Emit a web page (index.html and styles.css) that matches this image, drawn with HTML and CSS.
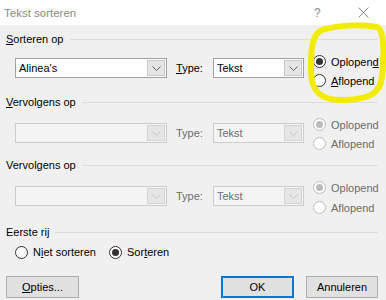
FILE: index.html
```html
<!DOCTYPE html>
<html>
<head>
<meta charset="utf-8">
<link rel="stylesheet" href="styles.css">
</head>
<body>
<div class="dialog">
  <div class="titlebar">
    <span class="title">Tekst sorteren</span>
    <span class="tb-help">?</span>
    <svg class="tb-close" width="11" height="11" viewBox="0 0 11 11"><path d="M0.5 0.5L10.5 10.5M10.5 0.5L0.5 10.5" stroke="#8c8c8c" stroke-width="1" fill="none"/></svg>
  </div>
  <div class="content">
    <div class="group-label"><span><u>S</u>orteren op</span><span class="rule"></span></div>
    <div class="row">
      <div class="combo combo-wide first"><span class="combo-text">Alinea's</span><span class="combo-btn"><svg width="9" height="5" viewBox="0 0 9 5"><path d="M0.5 0.5L4.5 4.5L8.5 0.5" stroke="#606060" fill="none"/></svg></span></div>
      <span class="type-label first"><u>T</u>ype:</span>
      <div class="combo combo-type first"><span class="combo-text">Tekst</span><span class="combo-btn"><svg width="9" height="5" viewBox="0 0 9 5"><path d="M0.5 0.5L4.5 4.5L8.5 0.5" stroke="#606060" fill="none"/></svg></span></div>
      <div class="radios">
        <div class="radio"><span class="circle checked"></span><span>Oplopen<u>d</u></span></div>
        <div class="radio"><span class="circle"></span><span><u>A</u>flopend</span></div>
      </div>
    </div>

    <div class="group-label"><span><u>V</u>ervolgens op</span><span class="rule"></span></div>
    <div class="row disabled">
      <div class="combo combo-wide"><span class="combo-text"></span><span class="combo-btn"><svg width="9" height="5" viewBox="0 0 9 5"><path d="M0.5 0.5L4.5 4.5L8.5 0.5" stroke="#c4c4c4" fill="none"/></svg></span></div>
      <span class="type-label">Type:</span>
      <div class="combo combo-type"><span class="combo-text">Tekst</span><span class="combo-btn"><svg width="9" height="5" viewBox="0 0 9 5"><path d="M0.5 0.5L4.5 4.5L8.5 0.5" stroke="#c4c4c4" fill="none"/></svg></span></div>
      <div class="radios">
        <div class="radio"><span class="circle checked"></span><span>Oplopend</span></div>
        <div class="radio"><span class="circle"></span><span>Aflopend</span></div>
      </div>
    </div>

    <div class="group-label"><span>Vervol<u>g</u>ens op</span><span class="rule"></span></div>
    <div class="row disabled row-last">
      <div class="combo combo-wide"><span class="combo-text"></span><span class="combo-btn"><svg width="9" height="5" viewBox="0 0 9 5"><path d="M0.5 0.5L4.5 4.5L8.5 0.5" stroke="#c4c4c4" fill="none"/></svg></span></div>
      <span class="type-label">Type:</span>
      <div class="combo combo-type"><span class="combo-text">Tekst</span><span class="combo-btn"><svg width="9" height="5" viewBox="0 0 9 5"><path d="M0.5 0.5L4.5 4.5L8.5 0.5" stroke="#c4c4c4" fill="none"/></svg></span></div>
      <div class="radios">
        <div class="radio"><span class="circle checked"></span><span>Oplopend</span></div>
        <div class="radio tall"><span class="circle"></span><span>Aflopend</span></div>
      </div>
    </div>

    <div class="group-label label-first-row"><span>Eerste rij</span><span class="rule"></span></div>
    <div class="radio-line">
      <div class="radio"><span class="circle"></span><span>N<u>i</u>et sorteren</span></div>
      <div class="radio"><span class="circle checked"></span><span>Sor<u>t</u>eren</span></div>
    </div>

    <div class="buttons">
      <button class="btn"><u>O</u>pties...</button>
      <span class="spacer"></span>
      <button class="btn btn-default">OK</button>
      <button class="btn">Annuleren</button>
    </div>
  </div>
  <svg class="highlight" width="386" height="300" viewBox="0 0 386 300">
    <path d="M320 31 C334 25 362 24 377 27 C385 31 384 55 382 76 C381 93 370 99 345 100 C321 101 311 92 311 70 C311 50 312 36 320 31 Z" stroke="#f2ec00" stroke-width="6" fill="none" stroke-linejoin="round"/>
  </svg>
</div>
</body>
</html>
```
FILE: styles.css
```css
* { box-sizing: border-box; }
html, body { margin: 0; padding: 0; }
body {
  width: 386px;
  height: 300px;
  overflow: hidden;
  background: #f0f0f0;
  font-family: "Liberation Sans", Arial, sans-serif;
  font-size: 11px;
  color: #000;
}
.dialog { position: relative; width: 386px; height: 300px; }
.titlebar {
  height: 25px;
  background: #fff;
  display: flex;
  align-items: center;
  padding-left: 4px;
  color: #8c8c8c;
  font-size: 11.5px;
}
.title { flex: 1; }
.tb-help { width: 12px; margin-right: 32px; font-size: 12px; color: #8c8c8c; }
.tb-close { margin-right: 17px; }
.content { padding: 6px 8px 0 6px; }
.group-label {
  display: flex;
  align-items: center;
  height: 16px;
  line-height: 16px;
}
.group-label .rule { flex: 1; height: 1px; background: #dcdcdc; margin-left: 6px; }
.row {
  display: flex;
  align-items: flex-start;
  margin-top: 5px;
  margin-bottom: 4px;
  padding-left: 9px;
  height: 38px;
}
.row.row-last { height: 39px; }
.combo {
  display: flex;
  flex-shrink: 0;
  height: 20px;
  margin-top: 8px;
  border: 1px solid #a0a0a0;
  background: #fff;
}
.combo.first { margin-top: 6px; }
.combo-wide { width: 152px; }
.combo-type { width: 91px; }
.combo-text { flex: 1; padding-left: 3px; line-height: 18px; }
.combo-btn {
  width: 18px;
  margin: 1px;
  background: #e5e5e5;
  border: 1px solid #c8c8c8;
  display: flex;
  align-items: center;
  justify-content: center;
}
.type-label {
  flex-shrink: 0;
  width: 46px;
  padding-left: 9px;
  line-height: 20px;
  margin-top: 8px;
}
.type-label.first { margin-top: 6px; }
.radios { flex-shrink: 0; margin-left: 9px; display: flex; flex-direction: column; }
.radio { display: flex; align-items: center; height: 19px; white-space: nowrap; }
.radio.tall { height: 21px; }
.circle {
  flex-shrink: 0;
  width: 13px;
  height: 13px;
  border: 1px solid #333;
  border-radius: 50%;
  background: #fff;
  margin-right: 5px;
  display: flex;
  align-items: center;
  justify-content: center;
}
.circle.checked::after {
  content: "";
  width: 7px;
  height: 7px;
  border-radius: 50%;
  background: #333;
}
.disabled { color: #6d6d6d; }
.disabled .combo { border-color: #cccccc; background: #f4f4f4; }
.disabled .combo-btn { background: #e6e6e6; border-color: #d4d4d4; }
.disabled .circle { border-color: #bcbcbc; }
.disabled .circle.checked::after { background: #bcbcbc; }
.label-first-row { margin-top: 7px; }
.radio-line {
  display: flex;
  align-items: center;
  margin-top: 4px;
  height: 16px;
  padding-left: 9px;
  gap: 13px;
}
.buttons {
  display: flex;
  margin-top: 16px;
}
.spacer { flex: 1; }
.btn {
  height: 22px;
  width: 73px;
  background: #e1e1e1;
  border: 1px solid #adadad;
  font-family: inherit;
  font-size: 11px;
  color: #000;
  padding: 0;
  margin-right: 12px;
}
.btn:last-child { margin-right: 0; width: 72px; }
.btn-default { border: 2px solid #0078d7; }
.highlight { position: absolute; left: 0; top: 0; pointer-events: none; }
```
